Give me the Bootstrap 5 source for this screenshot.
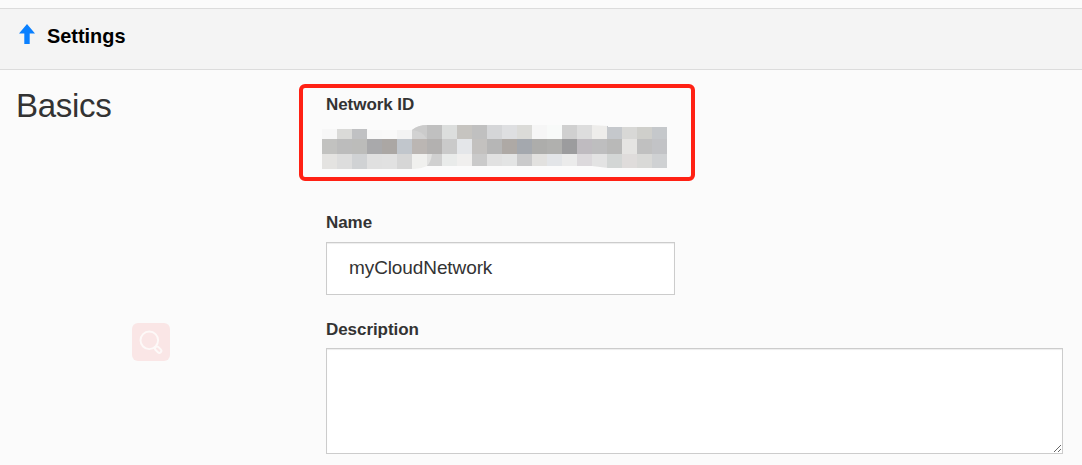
<!DOCTYPE html>
<html lang="en">
<head>
<meta charset="utf-8">
<meta name="viewport" content="width=device-width, initial-scale=1">
<title>Settings</title>
<link href="https://cdn.jsdelivr.net/npm/bootstrap@5.3.0/dist/css/bootstrap.min.css" rel="stylesheet">
<style>
body{background:#fbfbfb;color:#333;font-family:"Liberation Sans",Arial,sans-serif;height:465px;overflow:hidden}
.settings-bar{margin-top:8px;height:62px;background:#f4f4f4;border:solid #dcdcdc;border-width:1px 0;padding:15px 0 0 19px;gap:12px}
.settings-bar h1{font-size:19.9px;line-height:24px;color:#000}
.side{width:299px;padding:17px 0 0 16px}
.side h2{font-size:33.1px;line-height:38px;letter-spacing:-.35px}
.search-tile{width:38px;height:38px;border-radius:6px;background:#fae6e6;margin:198px 0 0 116px}
.fields{padding-top:14px;width:764px}
.id-box{width:396px;height:97px;border:4px solid #ff2114;border-radius:6px;padding:7px 0 0 19px}
.field-label{font-size:17px;line-height:20px;font-weight:700;display:block;letter-spacing:-.06px}
.mosaic{margin-top:10px}
.inset{margin-left:27px}
.form-control,.form-control:focus{border:1px solid #ccc;border-radius:0;color:#333;background:#fff;box-shadow:inset 0 1px 1px rgba(0,0,0,.075)}
.name-input{width:349px;height:53px;font-size:19px;padding:0 22px 2px;letter-spacing:-.1px}
.desc-input{width:737px;height:106px;min-height:0;font-size:19px}
</style>
</head>
<body>
<header class="settings-bar d-flex align-items-start">
  <svg width="16" height="20" viewBox="0 0 16 20" fill="#0a80ff"><path d="M8 0 16 9.5H10.7V20H5.3V9.5H0Z"/></svg>
  <h1 class="fw-bold m-0">Settings</h1>
</header>
<main class="d-flex">
  <div class="side flex-shrink-0">
    <h2 class="fw-normal m-0">Basics</h2>
    <div class="search-tile"><svg class="d-block" width="38" height="38" viewBox="0 0 38 38" fill="none" stroke="#fdf9f8" stroke-width="1.9"><circle cx="17.3" cy="17.3" r="8.8"/><rect x="-2" y="-3.6" width="4" height="7.2" rx="2" transform="translate(26.2 26.7) rotate(-45)"/></svg></div>
  </div>
  <form class="fields flex-shrink-0">
    <div class="id-box">
      <span class="field-label ms-1">Network ID</span>
      <svg class="mosaic d-block" width="345" height="44" viewBox="0 0 345 44">
        <clipPath id="smudge"><path d="M0 4H46V5H90Q96 0 105 0H270L286 1V2H345V43H286L270 41H105Q99 44 92 44H0Z"/></clipPath>
        <g id="cells" clip-path="url(#smudge)" shape-rendering="crispEdges"></g>
        <path d="M90 5Q96 0 105 0V14Q101 6 90 5Z" fill="#c6c6c6" opacity=".6"/>
        <path d="M105 29H110Q109 37 105 41Z" fill="#e2e2e1"/>
      </svg>
    </div>
    <div class="inset">
      <label class="field-label" for="name" style="margin-top:32px;margin-bottom:9px">Name</label>
      <input class="form-control name-input" id="name" value="myCloudNetwork" spellcheck="false">
      <label class="field-label" for="description" style="margin-top:25px;margin-bottom:8px">Description</label>
      <textarea class="form-control desc-input" id="description"></textarea>
    </div>
  </form>
</main>
<script src="https://cdn.jsdelivr.net/npm/bootstrap@5.3.0/dist/js/bootstrap.bundle.min.js"></script>
<script>
// Redacted identifier: three rows of 15px cells.
const rows = [
 "f7f7f7 dadad8 c0c1c3 f8f8f8 f9f9f9 f3f3f3 d2d2d2 c0c0c0 dcdedd c6c4c0 c0c0c0 d5d6d8 dedfe1 dbdbd8 f6f6f6 f8faf9 d0d0d0 dddddd eeedeb c5c8cc d8d8d6 cfcfcb c5c8cb",
 "c2c2c0 bcbcbc bcbcba a9a9ab aba7a4 c1c6cc bbb6b3 b3b1b0 cacaca e4e6e9 c3c1bf b6b6b6 aea9a5 a4a8ae adadab b0b0ae 9c9c9e bfbbc0 bebebf b9b9b8 e5e4e2 c0c0c0 c2c3c6",
 "e4e3e1 dddddd d0d2d4 e0e0e0 e1e1e1 d6d6d6 f0f0ee d0d0d0 e9ebea f0efee cacaca e1e1e1 e3e4e4 cacacb e2e1df e3e5e8 ebebeb dcd9dc e3e3e3 d3d6d5 dfdcdb d9d9d7 cfd1d3"];
const ys = [0, 14, 29], cells = document.getElementById("cells");
rows.forEach((row, r) => row.split(" ").forEach((color, c) => {
  const cell = document.createElementNS("http://www.w3.org/2000/svg", "rect");
  for (const [k, v] of Object.entries({x: c * 15, y: ys[r], width: 15, height: r ? 15 : 14, fill: "#" + color})) cell.setAttribute(k, v);
  cells.append(cell);
}));
</script>
</body>
</html>
